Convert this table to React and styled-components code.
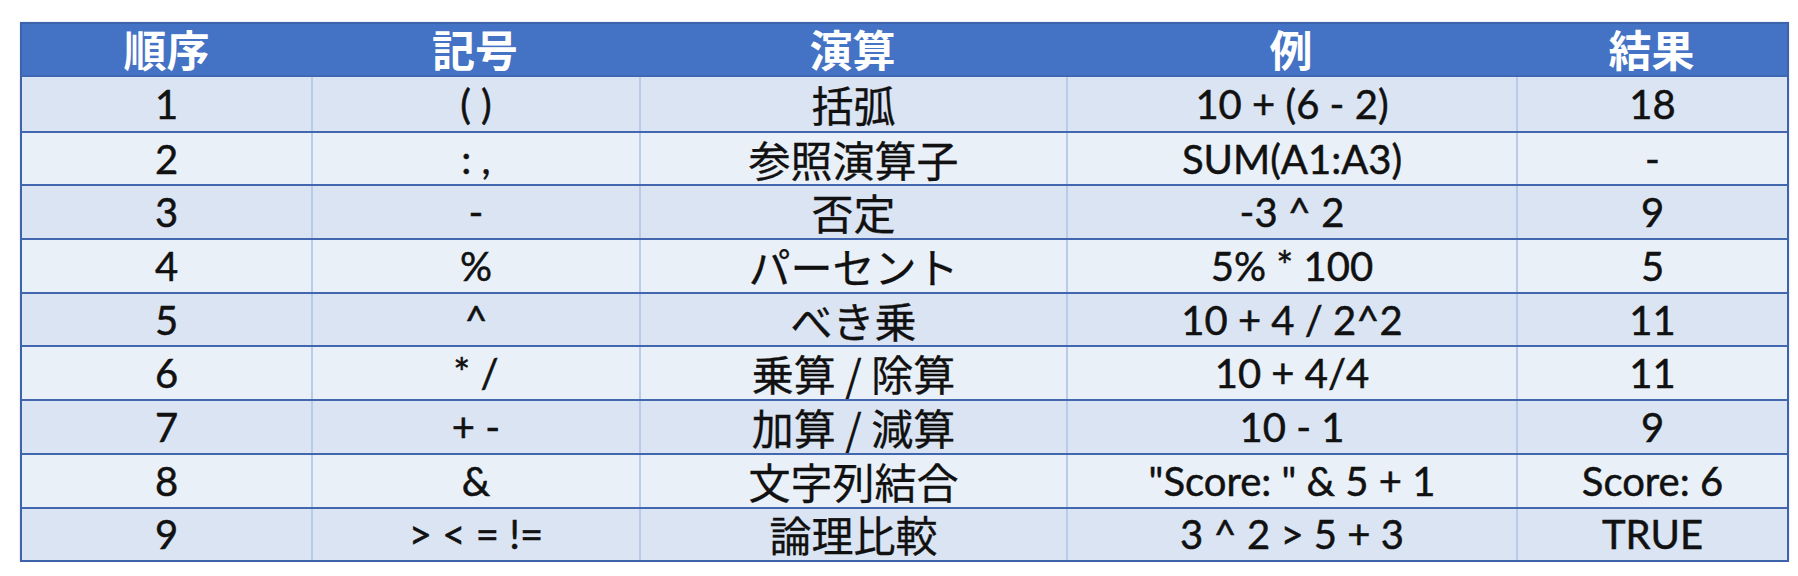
import React from "react";
import styled, { createGlobalStyle } from "styled-components";

const Global = createGlobalStyle`
  html, body { margin: 0; padding: 0; background: #ffffff; }
  body { font-family: "Lato", "Noto Sans CJK JP", sans-serif; }
`;

const Page = styled.div`
  padding: 22px 9px 0 20px;
`;

const Table = styled.div`
  width: 1769px;
  box-sizing: border-box;
  border: 2px solid #3d63ab;
  box-shadow: 0 0 2px rgba(120, 150, 210, 0.35);
`;

const cols = "289px 328px 427px 450px 271px";

const HeaderRow = styled.div`
  display: grid;
  grid-template-columns: ${cols};
  height: 51px;
  background: #4472c4;
  border-bottom: 2px solid #3f68b4;
`;

const HeadCell = styled.div`
  display: flex;
  align-items: center;
  justify-content: center;
  color: #ffffff;
  font-family: "Noto Sans CJK JP", sans-serif;
  font-weight: 700;
  font-size: 43px;
  line-height: 1;
  padding-bottom: 2px;
`;

const Row = styled.div`
  display: grid;
  grid-template-columns: ${cols};
  height: 53.7px;
  box-sizing: border-box;
  background: ${(p) => (p.$odd ? "#dae4f3" : "#e9f0f8")};
  border-top: ${(p) => (p.$first ? "none" : "2.5px solid #4267ae")};
`;

const Cell = styled.div`
  display: flex;
  align-items: center;
  justify-content: center;
  color: #111111;
  font-family: "Lato", "Noto Sans CJK JP", sans-serif;
  font-size: 40px;
  line-height: 1;
  white-space: pre;
  -webkit-text-stroke: 0.5px #111111;
  border-left: ${(p) => (p.$divider ? "2px solid #b9cbe8" : "none")};
`;

const Jp = styled.span`
  font-family: "Noto Sans CJK JP", sans-serif;
  font-size: 42px;
  font-weight: 400;
  line-height: 1;
  -webkit-text-stroke: 0.3px #111111;
`;

const headers = ["順序", "記号", "演算", "例", "結果"];

const rows = [
  ["1", "( )", "括弧", "10 + (6 - 2)", "18"],
  ["2", ": ,", "参照演算子", "SUM(A1:A3)", "-"],
  ["3", "-", "否定", "-3 ^ 2", "9"],
  ["4", "%", "パーセント", "5% * 100", "5"],
  ["5", "^", "べき乗", "10 + 4 / 2^2", "11"],
  ["6", "* /", "乗算 / 除算", "10 + 4/4", "11"],
  ["7", "+ -", "加算 / 減算", "10 - 1", "9"],
  ["8", "&", "文字列結合", "\"Score: \" & 5 + 1", "Score: 6"],
  ["9", "> < = !=", "論理比較", "3 ^ 2 > 5 + 3", "TRUE"],
];

export default function App() {
  return (
    <>
      <Global />
      <Page>
        <Table>
          <HeaderRow>
            {headers.map((h) => (
              <HeadCell key={h}>{h}</HeadCell>
            ))}
          </HeaderRow>
          {rows.map((r, i) => (
            <Row key={r[0]} $odd={i % 2 === 0} $first={i === 0}>
              {r.map((c, j) => (
                <Cell key={j} $divider={j > 0}>
                  {j === 2 ? <Jp>{c}</Jp> : c}
                </Cell>
              ))}
            </Row>
          ))}
        </Table>
      </Page>
    </>
  );
}
